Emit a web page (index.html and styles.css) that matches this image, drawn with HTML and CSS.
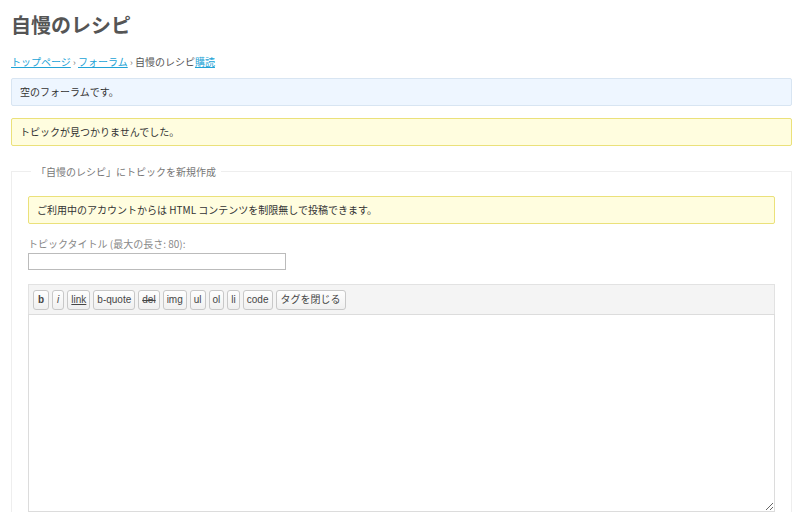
FILE: index.html
```html
<!DOCTYPE html>
<html lang="ja">
<head>
<meta charset="utf-8">
<title>自慢のレシピ</title>
<link rel="stylesheet" href="styles.css">
</head>
<body>
<div class="page">
  <h1 class="title">自慢のレシピ</h1>
  <div class="crumbs"><a href="#">トップページ</a> <span class="sep">›</span> <a href="#">フォーラム</a> <span class="sep">›</span> 自慢のレシピ<a href="#">購読</a></div>
  <div class="notice info">空のフォーラムです。</div>
  <div class="notice warn">トピックが見つかりませんでした。</div>
  <fieldset class="newtopic">
    <legend>「自慢のレシピ」にトピックを新規作成</legend>
    <div class="notice warn inner">ご利用中のアカウントからは HTML コンテンツを制限無しで投稿できます。</div>
    <label class="label">トピックタイトル (最大の長さ: 80):</label>
    <input class="titlein" type="text">
    <div class="editor">
      <div class="toolbar">
        <span class="btn b">b</span>
        <span class="btn i">i</span>
        <span class="btn u">link</span>
        <span class="btn">b-quote</span>
        <span class="btn s">del</span>
        <span class="btn">img</span>
        <span class="btn">ul</span>
        <span class="btn">ol</span>
        <span class="btn">li</span>
        <span class="btn">code</span>
        <span class="btn jp">タグを閉じる</span>
      </div>
      <textarea class="body"></textarea>
    </div>
  </fieldset>
</div>
</body>
</html>
```
FILE: styles.css
```css
html, body { margin: 0; padding: 0; background: #fff; }
body {
  font-family: "Liberation Sans", "Noto Sans CJK JP", sans-serif;
  color: #333;
  font-size: 10px;
}
.page { padding: 0 8px 0 11px; }
.title {
  margin: 0;
  padding-top: 11px;
  font-size: 20px;
  line-height: 28px;
  font-weight: bold;
  color: #555;
  font-family: "Noto Sans CJK JP", sans-serif;
}
.crumbs {
  margin-top: 15px;
  line-height: 16px;
  color: #555;
  font-size: 10px;
  font-family: "Noto Sans CJK JP", sans-serif;
}
.crumbs a { color: #21a3d6; text-decoration: underline; }
.crumbs .sep { color: #777; font-size: 9px; }
.notice {
  padding: 6px 8px;
  line-height: 14px;
  border-radius: 2px;
  font-size: 10px;
  font-family: "Noto Sans CJK JP", sans-serif;
  color: #333;
}
.info { margin-top: 7px; background: #eef6ff; border: 1px solid #d8e5f2; }
.warn { background: #fffddf; border: 1px solid #ebe17a; margin-top: 12px; }
.newtopic {
  margin: 18px 0 0 0;
  padding: 17px 16px 0 16px;
  border: 1px solid #eeeeee;
  border-bottom: none;
  min-width: 0;
}
.newtopic legend {
  margin-left: 3px;
  padding: 0 5px;
  color: #777;
  font-family: "Noto Sans CJK JP", sans-serif;
  font-size: 10px;
}
.notice.inner { margin-top: 0; padding: 6px 8px; }
.label {
  display: block;
  margin-top: 13px;
  color: #888;
  line-height: 14px;
  font-size: 10px;
  font-family: "Noto Sans CJK JP", sans-serif;
}
.titlein {
  display: block;
  box-sizing: border-box;
  width: 258px;
  height: 17px;
  margin: 2px 0 0 0;
  padding: 0 2px;
  border: 1px solid #bbb;
  font-size: 11px;
}
.editor { margin-top: 14px; }
.toolbar {
  display: flex;
  gap: 3px;
  padding: 5px 4px 4px 4px;
  background: #f4f4f4;
  border: 1px solid #e2e2e2;
  border-bottom: none;
}
.btn {
  display: inline-block;
  height: 20px;
  line-height: 18px;
  box-sizing: border-box;
  padding: 0 3px;
  border: 1px solid #c8c8c8;
  border-radius: 3px;
  background: linear-gradient(#fefefe, #f0f0f0);
  color: #464646;
  font-size: 10px;
  font-family: "Liberation Sans", "Noto Sans CJK JP", sans-serif;
}
.btn.b { font-weight: bold; padding: 0 4px; }
.btn.i { font-style: italic; padding: 0 4px; }
.btn.u { text-decoration: underline; }
.btn.s { text-decoration: line-through; }
.btn.jp { padding: 0 4px; }
.body {
  display: block;
  box-sizing: border-box;
  width: 100%;
  height: 198px;
  margin: 0;
  border: 1px solid #dcdcdc;
  resize: vertical;
}
```
